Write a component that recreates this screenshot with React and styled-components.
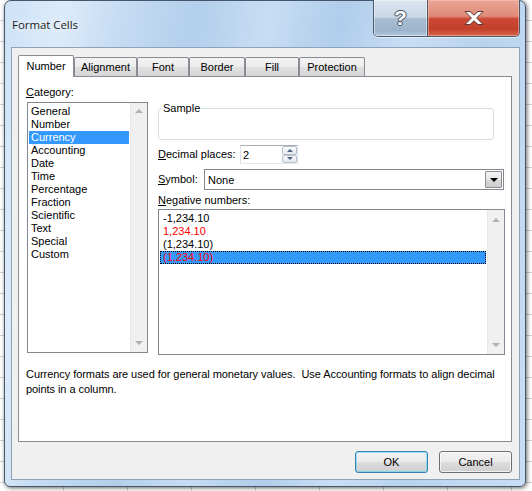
import styled, { createGlobalStyle } from 'styled-components';

const categorias = ['General', 'Number', 'Currency', 'Accounting', 'Date', 'Time', 'Percentage', 'Fraction', 'Scientific', 'Text', 'Special', 'Custom'];

const negativos = [
    { texto: '-1,234.10', vermelho: false },
    { texto: '1,234.10', vermelho: true },
    { texto: '(1,234.10)', vermelho: false },
    { texto: '(1,234.10)', vermelho: true },
];

const abas = [
    { nome: 'Number', largura: 56 },
    { nome: 'Alignment', largura: 63 },
    { nome: 'Font', largura: 52 },
    { nome: 'Border', largura: 56 },
    { nome: 'Fill', largura: 54 },
    { nome: 'Protection', largura: 66 },
];

function BarraRolagem({ $topo, $base }) {
    return (
        <Rolagem $topo={$topo} $base={$base}>
            <Seta $cima />
            <Seta />
        </Rolagem>
    );
}

function App() {
    return (
        <>
            <GlobalStyle />
            <Fundo>
                <Janela>
                    <BarraTitulo>
                        <Titulo>Format Cells</Titulo>
                        <BotoesJanela>
                            <BotaoAjuda>?</BotaoAjuda>
                            <BotaoFechar>
                                <svg width="20" height="14" viewBox="0 0 20 14">
                                    <polygon
                                        points="1,0.5 6,0.5 10,4.2 14,0.5 19,0.5 12.6,7 19,13.5 14,13.5 10,9.8 6,13.5 1,13.5 7.4,7"
                                        fill="#fff"
                                        stroke="#5a3a36"
                                        strokeWidth="1"
                                        strokeLinejoin="round"
                                    />
                                </svg>
                            </BotaoFechar>
                        </BotoesJanela>
                    </BarraTitulo>

                    <Cliente>
                        <Abas>
                            {abas.map((aba, i) => (
                                <Aba key={aba.nome} $largura={aba.largura} $ativa={i === 0}>
                                    {aba.nome}
                                </Aba>
                            ))}
                        </Abas>

                        <Painel>
                            <Conteudo>
                                <ColunaEsquerda>
                                    <Rotulo><u>C</u>ategory:</Rotulo>
                                    <Lista $largura={121} $altura={251}>
                                        <Itens>
                                            {categorias.map(cat => (
                                                <Item key={cat} $recuo={2} $selecionado={cat === 'Currency'}>
                                                    {cat}
                                                </Item>
                                            ))}
                                        </Itens>
                                        <BarraRolagem $topo={6} $base={7} />
                                    </Lista>
                                </ColunaEsquerda>

                                <ColunaDireita>
                                    <Amostra>
                                        <Legenda>Sample</Legenda>
                                    </Amostra>

                                    <Linha $altura={19} $topo={5}>
                                        <Rotulo $largura={82}><u>D</u>ecimal places:</Rotulo>
                                        <CampoNumero>
                                            2
                                            <Spinner>
                                                <SpinBotao><SetaSpin $cima /></SpinBotao>
                                                <SpinBotao><SetaSpin /></SpinBotao>
                                            </Spinner>
                                        </CampoNumero>
                                    </Linha>

                                    <Linha $altura={21} $topo={5}>
                                        <Rotulo $largura={46}><u>S</u>ymbol:</Rotulo>
                                        <Combo>
                                            <ComboTexto>None</ComboTexto>
                                            <ComboBotao><SetaCombo /></ComboBotao>
                                        </Combo>
                                    </Linha>

                                    <RotuloNegativos><u>N</u>egative numbers:</RotuloNegativos>
                                    <Lista $largura={347} $altura={146}>
                                        <Itens>
                                            {negativos.map((n, i) => (
                                                <Item
                                                    key={i}
                                                    $recuo={3}
                                                    $vermelho={n.vermelho}
                                                    $selecionado={i === 3}
                                                    $foco={i === 3}
                                                >
                                                    {n.texto}
                                                </Item>
                                            ))}
                                        </Itens>
                                        <BarraRolagem $topo={8} $base={7} />
                                    </Lista>
                                </ColunaDireita>
                            </Conteudo>

                            <Descricao>
                                Currency formats are used for general monetary values.&nbsp; Use Accounting formats to align decimal
                                <br />
                                points in a column.
                            </Descricao>
                        </Painel>

                        <Rodape>
                            <BotaoDialogo $padrao>OK</BotaoDialogo>
                            <BotaoDialogo>Cancel</BotaoDialogo>
                        </Rodape>
                    </Cliente>
                </Janela>
            </Fundo>
        </>
    );
}
export default App;

const GlobalStyle = createGlobalStyle`
    html, body {
        margin: 0;
        padding: 0;
    }
    body {
        font-family: 'Liberation Sans', Arial, sans-serif;
        font-size: 11px;
        color: #000;
    }
`;

const Fundo = styled.div`
    width: 532px;
    height: 491px;
    overflow: hidden;
    background-color: #fff;
    background-image:
        repeating-linear-gradient(to bottom, transparent 0 20px, #d0d0d0 20px 21px),
        repeating-linear-gradient(to right, transparent 0 63px, #d0d0d0 63px 64px);
`;

const Janela = styled.div`
    box-sizing: border-box;
    margin-left: 4px;
    width: 522px;
    height: 487px;
    border: 1px solid #46566b;
    border-radius: 7px 7px 6px 6px;
    padding: 0 5px 6px 6px;
    display: flex;
    flex-direction: column;
    box-shadow: 1px 1px 4px rgba(0, 0, 0, 0.6);
    background:
        linear-gradient(100deg,
            #cde2f7 0%, #dcebfa 10%, #c4dbf2 20%, #b3cfec 32%,
            #c7ddf3 44%, #b0cdeb 56%, #c9def4 68%, #b9d3ee 80%, #c9def4 100%);
`;

const BarraTitulo = styled.div`
    height: 46px;
    flex: none;
    display: flex;
    align-items: flex-start;
`;

const Titulo = styled.div`
    flex: 1;
    padding: 16px 0 0 1px;
    font-family: 'Open Sans', 'Liberation Sans', sans-serif;
    font-size: 11.4px;
    line-height: 15px;
    color: #1a1a1a;
    text-shadow: 0 0 6px rgba(255, 255, 255, 0.95), 0 0 10px rgba(255, 255, 255, 0.8);
`;

const BotoesJanela = styled.div`
    display: flex;
    margin-top: -1px;
    border: 1px solid #4b596b;
    border-top: none;
    border-radius: 0 0 5px 5px;
    overflow: hidden;
    box-shadow: 0 1px 0 rgba(255, 255, 255, 0.6);
`;

const BotaoAjuda = styled.div`
    width: 53px;
    height: 36px;
    display: flex;
    align-items: center;
    justify-content: center;
    border-right: 1px solid #4b596b;
    box-shadow: inset 0 0 0 1px rgba(255, 255, 255, 0.45);
    background: linear-gradient(to bottom, #dbe5ef 0%, #c9d7e5 48%, #a8bdd2 52%, #9cb4cc 85%, #b3c8dc 100%);
    font-family: 'Liberation Sans', sans-serif;
    font-weight: bold;
    font-size: 21px;
    color: #fff;
    text-shadow: 1px 0 0 #3c4a5c, -1px 0 0 #3c4a5c, 0 1px 0 #3c4a5c, 0 -1px 0 #3c4a5c;
`;

const BotaoFechar = styled.div`
    width: 91px;
    height: 36px;
    display: flex;
    align-items: center;
    justify-content: center;
    box-shadow: inset 0 0 0 1px rgba(255, 210, 200, 0.45);
    background: linear-gradient(to bottom, #eaa595 0%, #e08a78 45%, #cc4a35 52%, #c23f2a 80%, #d8664c 100%);
`;

const Cliente = styled.div`
    flex: 1;
    display: flex;
    flex-direction: column;
    background: #f0f0f0;
    border: 1px solid #8ea2b9;
    padding: 7px 7px 0 6px;
`;

const Abas = styled.div`
    display: flex;
    align-items: flex-end;
    height: 21px;
    flex: none;
`;

const Aba = styled.div`
    box-sizing: border-box;
    width: ${p => p.$largura}px;
    height: ${p => (p.$ativa ? 22 : 19)}px;
    margin-bottom: ${p => (p.$ativa ? -1 : 0)}px;
    position: relative;
    z-index: ${p => (p.$ativa ? 1 : 0)};
    border: 1px solid #898c95;
    border-bottom: none;
    border-radius: 2px 2px 0 0;
    padding-top: ${p => (p.$ativa ? 4 : 3)}px;
    text-align: center;
    line-height: 13px;
    background: ${p => (p.$ativa
        ? '#fff'
        : 'linear-gradient(to bottom, #f3f3f3 0%, #ececec 50%, #e0e0e0 51%, #d6d6d6 100%)')};
`;

const Painel = styled.div`
    box-sizing: border-box;
    height: 366px;
    flex: none;
    border: 1px solid #898c95;
    background: #fff;
    padding: 9px 0 0 7px;
`;

const Conteudo = styled.div`
    display: flex;
    gap: 10px;
`;

const ColunaEsquerda = styled.div`
    display: flex;
    flex-direction: column;
    gap: 3px;
`;

const ColunaDireita = styled.div`
    display: flex;
    flex-direction: column;
    padding-top: 16px;
`;

const Rotulo = styled.div`
    line-height: 13px;
    height: 13px;
    white-space: nowrap;
    width: ${p => (p.$largura ? `${p.$largura}px` : 'auto')};
    flex: none;
`;

const RotuloNegativos = styled(Rotulo)`
    margin: 4px 0 2px;
`;

const Lista = styled.div`
    box-sizing: border-box;
    width: ${p => p.$largura}px;
    height: ${p => p.$altura}px;
    margin-left: ${p => (p.$largura < 200 ? 1 : 0)}px;
    border: 1px solid #828790;
    background: #fff;
    display: flex;
`;

const Itens = styled.div`
    flex: 1;
    padding: 2px 1px 1px;
`;

const Item = styled.div`
    height: 13px;
    line-height: 13px;
    padding-left: ${p => p.$recuo}px;
    white-space: nowrap;
    color: ${p => (p.$vermelho ? '#ff0000' : p.$selecionado ? '#fff' : '#000')};
    background: ${p => (p.$selecionado ? '#3399ff' : 'transparent')};
    outline: ${p => (p.$foco ? '1px dotted #000' : 'none')};
    outline-offset: -1px;
`;

const Rolagem = styled.div`
    width: 17px;
    flex: none;
    background: #f0f0f0;
    border-left: 1px solid #e8e8e8;
    box-sizing: border-box;
    display: flex;
    flex-direction: column;
    justify-content: space-between;
    align-items: center;
    padding: ${p => p.$topo}px 0 ${p => p.$base}px;
`;

const Seta = styled.span`
    width: 0;
    height: 0;
    border-left: 4px solid transparent;
    border-right: 4px solid transparent;
    ${p => (p.$cima ? 'border-bottom: 4px solid #b0b0b0;' : 'border-top: 4px solid #b0b0b0;')}
`;

const Amostra = styled.fieldset`
    box-sizing: border-box;
    width: 336px;
    height: 38px;
    margin: 0;
    padding: 0;
    border: 1px solid #d5dfe5;
    border-radius: 3px;
`;

const Legenda = styled.legend`
    margin-left: 3px;
    padding: 0 1px;
    line-height: 13px;
`;

const Linha = styled.div`
    display: flex;
    align-items: center;
    height: ${p => p.$altura}px;
    margin-top: ${p => p.$topo}px;
`;

const CampoNumero = styled.div`
    box-sizing: border-box;
    width: 58px;
    height: 19px;
    border: 1px solid;
    border-color: #abadb3 #dbdfe6 #e3e9ef #e2e3ea;
    background: #fff;
    display: flex;
    align-items: center;
    padding-left: 2px;
`;

const Spinner = styled.div`
    margin-left: auto;
    width: 15px;
    height: 17px;
    display: flex;
    flex-direction: column;
`;

const SpinBotao = styled.div`
    flex: 1;
    box-sizing: border-box;
    border: 1px solid #b7c1cf;
    border-radius: 2px;
    background: linear-gradient(to bottom, #fbfbfb, #e4e8ee);
    display: flex;
    align-items: center;
    justify-content: center;
`;

const SetaSpin = styled.span`
    width: 0;
    height: 0;
    border-left: 3px solid transparent;
    border-right: 3px solid transparent;
    ${p => (p.$cima ? 'border-bottom: 3px solid #4d6185;' : 'border-top: 3px solid #4d6185;')}
`;

const Combo = styled.div`
    box-sizing: border-box;
    width: 300px;
    height: 21px;
    border: 1px solid #828790;
    background: #fff;
    display: flex;
    align-items: center;
    padding: 1px;
`;

const ComboTexto = styled.span`
    flex: 1;
    padding-left: 2px;
`;

const ComboBotao = styled.div`
    box-sizing: border-box;
    width: 17px;
    height: 17px;
    border: 1px solid #8d8d8d;
    border-radius: 1px;
    background: linear-gradient(to bottom, #f4f4f4 0%, #e8e8e8 50%, #d9d9d9 51%, #cdcdcd 100%);
    display: flex;
    align-items: center;
    justify-content: center;
`;

const SetaCombo = styled.span`
    width: 0;
    height: 0;
    border-left: 4px solid transparent;
    border-right: 4px solid transparent;
    border-top: 4px solid #000;
`;

const Descricao = styled.p`
    margin: 12px 0 0;
    line-height: 15px;
    white-space: nowrap;
    letter-spacing: -0.06px;
`;

const Rodape = styled.div`
    display: flex;
    justify-content: flex-end;
    gap: 11px;
    margin-top: 9px;
`;

const BotaoDialogo = styled.div`
    box-sizing: border-box;
    width: 73px;
    height: 22px;
    display: flex;
    align-items: center;
    justify-content: center;
    border: 1px solid ${p => (p.$padrao ? '#3c7fb1' : '#707070')};
    border-radius: 3px;
    box-shadow: inset 0 0 0 1px ${p => (p.$padrao ? 'rgba(72, 216, 251, 0.55)' : 'rgba(255, 255, 255, 0.7)')};
    background: linear-gradient(to bottom, #f2f2f2 0%, #ebebeb 50%, #dddddd 51%, #cfcfcf 100%);
`;
